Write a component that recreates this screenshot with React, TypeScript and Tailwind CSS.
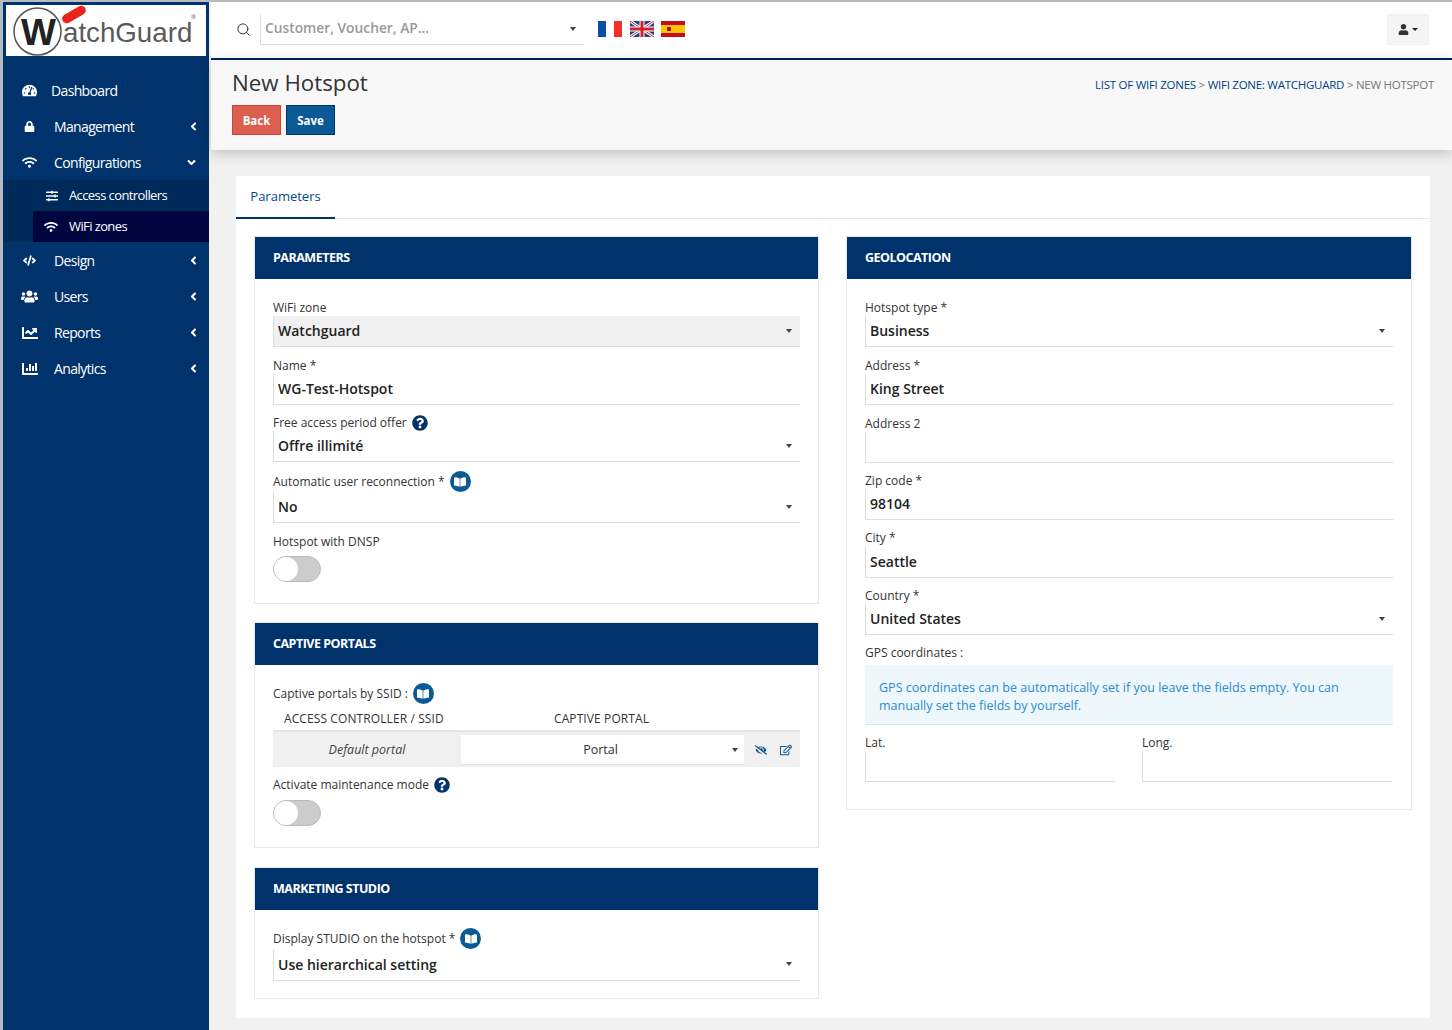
import type { ReactNode } from "react"
import { Search } from "lucide-react"
import {
  FaAngleDown,
  FaAngleLeft,
  FaBookOpen,
  FaChartBar,
  FaChartLine,
  FaCode,
  FaEyeSlash,
  FaLock,
  FaQuestionCircle,
  FaRegEdit,
  FaSlidersH,
  FaTachometerAlt,
  FaUser,
  FaUsers,
  FaWifi,
} from "react-icons/fa"

const Caret = ({ className = "" }: { className?: string }) => (
  <span className={`h-0 w-0 border-x-[3px] border-t-[4px] border-x-transparent border-t-[#444] ${className}`} />
)

function NavItem({ icon, label, arrow, textClass = "ml-[14px]" }: { icon: ReactNode; label: string; arrow?: "left" | "down"; textClass?: string }) {
  return (
    <div className="flex h-[36px] items-center pl-[16px] pr-[9px] pt-[1px] text-[14px] tracking-[-0.65px] text-white">
      <span className="flex w-[21px] justify-center text-[15px]">{icon}</span>
      <span className={`font-medium ${textClass}`}>{label}</span>
      {arrow === "left" && <FaAngleLeft className="ml-auto text-[13px]" />}
      {arrow === "down" && <FaAngleDown className="ml-auto mr-[2px] text-[13px]" />}
    </div>
  )
}

function Sidebar() {
  return (
    <aside className="flex w-[206px] shrink-0 flex-col bg-[#00336b]">
      <div className="relative mx-[3px] mt-[3px] h-[51px] bg-white">
        <svg className="absolute left-[7px] top-[2px]" width="50" height="49" viewBox="0 0 50 49">
          <circle cx="24.5" cy="24.5" r="23.5" fill="none" stroke="#555" strokeWidth="1.5" />
        </svg>
        <span className="absolute left-[15px] top-[3px] font-['Liberation_Sans',sans-serif] text-[37px] font-bold leading-[50px] tracking-[-1px] text-[#222]">W</span>
        <span className="absolute left-[57px] top-[9px] font-['Liberation_Sans',sans-serif] text-[27.7px] leading-[38px] text-[#5a5a5a]">atchGuard</span>
        <span className="absolute left-[185px] top-[9px] text-[6px] leading-none text-[#5a5a5a]">®</span>
        <span className="absolute left-[55px] top-[5px] h-[9px] w-[26px] -rotate-[30deg] rounded-full bg-[#e8231a]" />
      </div>
      <nav className="mt-[16px] flex flex-col">
        <NavItem icon={<FaTachometerAlt />} label="Dashboard" textClass="ml-[11px]" />
        <NavItem icon={<FaLock className="text-[11px]" />} label="Management" arrow="left" />
        <NavItem icon={<FaWifi />} label="Configurations" arrow="down" />
        <div className="flex flex-col bg-[#002a5a]">
          <div className="flex h-[31px] items-center pl-[43px] text-[13px] font-medium tracking-[-0.6px] text-white">
            <FaSlidersH className="text-[12px]" />
            <span className="ml-[11px]">Access controllers</span>
          </div>
          <div className="ml-[30px] flex h-[31px] items-center bg-[#00053f] pl-[11px] text-[13px] font-medium tracking-[-0.6px] text-white">
            <FaWifi className="text-[14px]" />
            <span className="ml-[11px]">WiFi zones</span>
          </div>
        </div>
        <NavItem icon={<FaCode className="text-[13px]" />} label="Design" arrow="left" />
        <NavItem icon={<FaUsers className="text-[17px]" />} label="Users" arrow="left" />
        <NavItem icon={<FaChartLine className="text-[16px]" />} label="Reports" arrow="left" />
        <NavItem icon={<FaChartBar className="text-[16px]" />} label="Analytics" arrow="left" />
      </nav>
    </aside>
  )
}

function Flags() {
  return (
    <div className="ml-[14px] flex items-center gap-[7.5px]">
      <svg width="24" height="16" viewBox="0 0 24 16">
        <rect width="8" height="16" fill="#0b4ea2" />
        <rect x="8" width="8" height="16" fill="#fff" />
        <rect x="16" width="8" height="16" fill="#f42f2c" />
      </svg>
      <svg width="24" height="16" viewBox="0 0 24 16">
        <rect width="24" height="16" fill="#1f3f8f" />
        <path d="M0 0L24 16M24 0L0 16" stroke="#fff" strokeWidth="3" />
        <path d="M0 0L24 16M24 0L0 16" stroke="#d3202a" strokeWidth="1" />
        <path d="M12 0V16M0 8H24" stroke="#fff" strokeWidth="5" />
        <path d="M12 0V16M0 8H24" stroke="#d3202a" strokeWidth="3" />
      </svg>
      <svg width="24" height="16" viewBox="0 0 24 16">
        <rect width="24" height="16" fill="#c60b1e" />
        <rect y="4" width="24" height="8" fill="#ffc400" />
        <rect x="6" y="6" width="4" height="4" fill="#ad1519" />
      </svg>
    </div>
  )
}

function TopBar() {
  return (
    <header className="flex h-[58px] shrink-0 items-center border-b-2 border-[#00235f] bg-white pb-[2px] pl-[25px] pr-[23px]">
      <Search size={15} strokeWidth={1.6} className="text-[#333]" />
      <div className="ml-[9px] flex h-[31px] w-[324px] items-center border-b border-l border-[#ddd] pl-[4px] pr-[8px] text-[13.8px] font-semibold text-[#999]">
        <span>Customer, Voucher, AP...</span>
        <Caret className="ml-auto" />
      </div>
      <Flags />
      <button className="ml-auto flex h-[31px] w-[42px] items-center justify-center gap-[3px] rounded-[2px] border border-[#eee] bg-[#f4f4f4] text-[#333]">
        <FaUser className="text-[11px]" />
        <span className="h-0 w-0 border-x-[3px] border-t-[3px] border-x-transparent border-t-[#222]" />
      </button>
    </header>
  )
}

function PageHeader() {
  return (
    <div className="relative z-10 flex h-[90px] shrink-0 justify-between bg-[#f8f8f8] pl-[21px] pr-[18px] shadow-[0_3px_12px_rgba(0,0,0,0.22)]">
      <div>
        <h1 className="mt-[8px] text-[22.3px] leading-[30px] text-[#333]">New Hotspot</h1>
        <div className="mt-[7px] flex gap-[5px]">
          <button className="h-[30px] w-[49px] border border-[#d43f3a] bg-[#dd5f50] pt-[1px] text-[11.5px] font-bold text-white">Back</button>
          <button className="h-[30px] w-[49px] border border-[#00336b] bg-[#0b5a96] pt-[1px] text-[11.5px] font-bold text-white">Save</button>
        </div>
      </div>
      <div className="mt-[17px] text-[11.5px] leading-[16px] tracking-[-0.26px] text-[#777]">
        <span className="text-[#003f85]">LIST OF WIFI ZONES</span> &gt; <span className="text-[#003f85]">WIFI ZONE: WATCHGUARD</span> &gt; NEW HOTSPOT
      </div>
    </div>
  )
}

function HelpIcon() {
  return <FaQuestionCircle className="ml-[5px] text-[16px] text-[#00336b]" />
}

function BookIcon() {
  return (
    <span className="ml-[5px] flex h-[21px] w-[21px] items-center justify-center rounded-full bg-[#0b5a96] text-white">
      <FaBookOpen className="text-[12px]" />
    </span>
  )
}

function Field({
  label,
  value,
  select,
  muted,
  extra,
  inputClass = "h-[31px]",
  labelClass = "h-[16px]",
  className = "mb-[11px]",
}: {
  label: string
  value?: string
  select?: boolean
  muted?: boolean
  extra?: ReactNode
  inputClass?: string
  labelClass?: string
  className?: string
}) {
  return (
    <div className={className}>
      <div className={`flex items-center pb-[1px] text-[12px] text-[#333] ${labelClass}`}>
        {label}
        {extra}
      </div>
      <div className={`flex items-center border-b border-l border-[#ddd] pb-[1px] pl-[4px] pr-[8px] text-[14px] font-semibold text-[#222] ${inputClass} ${muted ? "bg-[#f0f0f0]" : ""}`}>
        <span>{value}</span>
        {select && <Caret className="ml-auto" />}
      </div>
    </div>
  )
}

function Toggle() {
  return (
    <div className="flex h-[26px] w-[48px] items-center rounded-full border border-[#bbb] bg-[#ccc]">
      <span className="h-[24px] w-[24px] rounded-full bg-white" />
    </div>
  )
}

function Panel({ title, className = "", children }: { title: string; className?: string; children: ReactNode }) {
  return (
    <section className={`border border-[#e8e8e8] bg-white ${className}`}>
      <h3 className="flex h-[42px] items-center bg-[#00336b] pl-[18px] pt-[1px] text-[12.5px] font-bold tracking-[-0.5px] text-white">{title}</h3>
      <div className="px-[18px]">{children}</div>
    </section>
  )
}

function LeftColumn() {
  return (
    <div className="flex w-[565px] flex-col">
      <Panel title="PARAMETERS">
        <div className="h-[324px] pt-[21px]">
          <Field label="WiFi zone" value="Watchguard" select muted />
          <Field label="Name *" value="WG-Test-Hotspot" />
          <Field label="Free access period offer" value="Offre illimité" select extra={<HelpIcon />} labelClass="h-[15px]" className="mb-[10px]" />
          <Field label="Automatic user reconnection *" value="No" select extra={<BookIcon />} labelClass="h-[20px]" />
          <div className="flex h-[15px] items-center text-[12px] text-[#333]">Hotspot with DNSP</div>
          <div className="mt-[7px]"><Toggle /></div>
        </div>
      </Panel>
      <Panel title="CAPTIVE PORTALS" className="mt-[18px]">
        <div className="h-[182px] pt-[18px]">
          <div className="flex h-[21px] items-center text-[12px] text-[#333]">
            Captive portals by SSID :
            <BookIcon />
          </div>
          <div className="flex h-[26px] items-center pt-[3px] text-[12px] font-medium tracking-[0.1px] text-[#333]">
            <span className="w-[281px] pl-[11px]">ACCESS CONTROLLER / SSID</span>
            <span>CAPTIVE PORTAL</span>
          </div>
          <div className="flex h-[37px] items-center border-t-2 border-[#e4e4e4] bg-[#f0f0f0]">
            <span className="w-[188px] pt-[1px] text-center text-[12.5px] italic text-[#444]">Default portal</span>
            <div className="flex h-[30px] w-[283px] items-center border-b border-[#e4e4e4] bg-white pr-[6px] pt-[2px] text-[12.5px] text-[#333]">
              <span className="flex-1 pl-[8px] text-center">Portal</span>
              <Caret />
            </div>
            <FaEyeSlash className="ml-[11px] text-[12px] text-[#0b5a96]" />
            <FaRegEdit className="ml-[13px] text-[12px] text-[#0b5a96]" />
          </div>
          <div className="mt-[9px] flex h-[18px] items-center text-[12px] text-[#333]">
            Activate maintenance mode
            <HelpIcon />
          </div>
          <div className="mt-[6px]"><Toggle /></div>
        </div>
      </Panel>
      <Panel title="MARKETING STUDIO" className="mt-[19px]">
        <div className="h-[88px] pt-[19px]">
          <Field
            label="Display STUDIO on the hotspot *"
            value="Use hierarchical setting"
            select
            extra={<BookIcon />}
            labelClass="h-[20px]"
            inputClass="h-[32px]"
            className="mb-0"
          />
        </div>
      </Panel>
    </div>
  )
}

function RightColumn() {
  return (
    <div className="ml-[27px] w-[566px]">
      <Panel title="GEOLOCATION">
        <div className="h-[530px] pt-[21px]">
          <Field label="Hotspot type *" value="Business" select />
          <Field label="Address *" value="King Street" />
          <Field label="Address 2" className="mb-[10px]" />
          <Field label="Zip code *" value="98104" className="mb-[10px]" />
          <Field label="City *" value="Seattle" inputClass="h-[32px]" className="mb-[10px]" />
          <Field label="Country *" value="United States" select className="mb-[10px]" />
          <div className="flex h-[15px] items-center text-[12px] text-[#333]">GPS coordinates :</div>
          <div className="mt-[5px] h-[60px] border-b border-[#cfe6f3] bg-[#eef7fc] px-[14px] pb-[12px] pt-[14px] text-[12.55px] leading-[18px] text-[#2a8bd0]">
            GPS coordinates can be automatically set if you leave the fields empty. You can manually set the fields by yourself.
          </div>
          <div className="mt-[10px] flex gap-[27px]">
            <Field label="Lat." className="w-[250px]" />
            <Field label="Long." className="w-[250px]" />
          </div>
        </div>
      </Panel>
    </div>
  )
}

export default function App() {
  return (
    <div className="flex h-[1030px] w-[1452px] overflow-hidden border-t-2 border-l-[3px] border-[#b4bcc0] bg-[#f1f1f1] font-['Open_Sans',sans-serif]">
      <Sidebar />
      <main className="ml-[2px] flex min-w-0 flex-1 flex-col">
        <TopBar />
        <PageHeader />
        <div className="mx-[25px] mt-[26px] flex h-[842px] w-[1194px] flex-col bg-white">
          <div className="flex h-[43px] shrink-0 border-b border-[#e8e8e8]">
            <div className="flex h-[43px] w-[99px] items-center justify-center border-b-2 border-[#00336b] pt-[1px] text-[13px] text-[#00478f]">Parameters</div>
          </div>
          <div className="flex pl-[18px] pt-[17px]">
            <LeftColumn />
            <RightColumn />
          </div>
        </div>
      </main>
    </div>
  )
}
